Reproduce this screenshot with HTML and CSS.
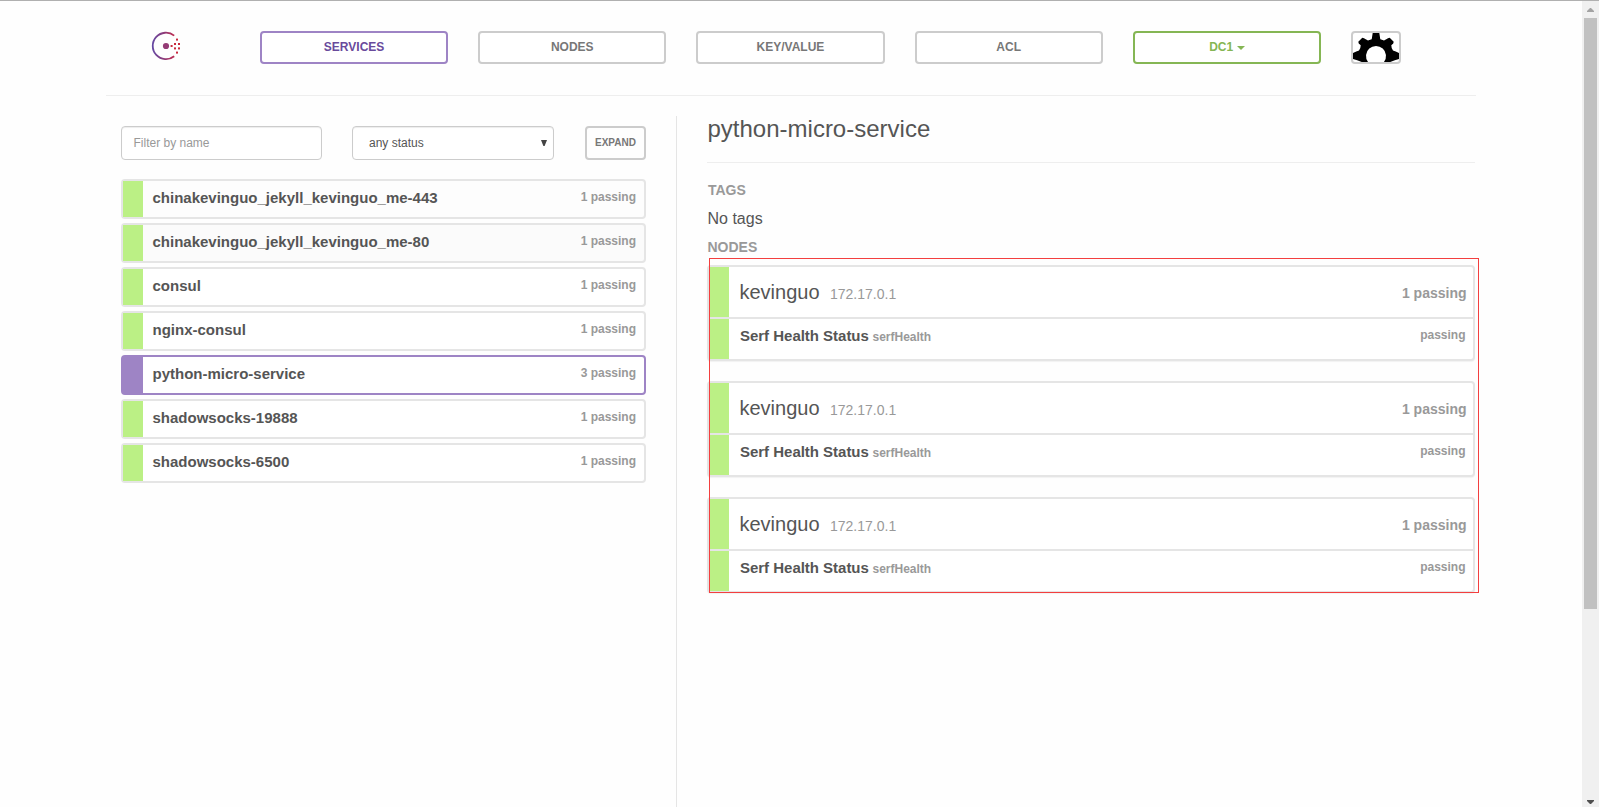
FILE: index.html
```html
<!DOCTYPE html>
<html lang="en">
<head>
<meta charset="utf-8">
<title>Consul</title>
<link rel="stylesheet" href="styles.css">
</head>
<body>
<div class="page">
  <div class="container">
    <header class="topbar">
      <div class="brand">
        <svg width="30" height="30" viewBox="0 0 30 30">
          <defs><linearGradient id="ring" gradientUnits="userSpaceOnUse" x1="1" y1="0" x2="25" y2="0"><stop offset="0" stop-color="#6349a5"/><stop offset=".5" stop-color="#8d3a78"/><stop offset="1" stop-color="#c62a49"/></linearGradient></defs>
          <path d="M23.2 4.6A13.2 13.2 0 1 0 23.2 25.2" fill="none" stroke="url(#ring)" stroke-width="1.8"/>
          <circle cx="15" cy="15" r="3.1" fill="#943b75"/>
          <g fill="#c9283c"><rect x="19.6" y="14" width="2" height="2"/><rect x="23" y="12" width="2" height="2"/><rect x="23" y="16.4" width="2" height="2"/><rect x="27" y="12" width="2" height="2"/><rect x="27" y="16.4" width="2" height="2"/><rect x="25" y="7.6" width="2" height="2"/><rect x="25" y="20.6" width="2" height="2"/></g>
        </svg>
      </div>
      <nav class="nav">
        <a class="btn btn-active">SERVICES</a>
        <a class="btn">NODES</a>
        <a class="btn">KEY/VALUE</a>
        <a class="btn">ACL</a>
        <a class="btn btn-dc">DC1 <span class="caret"></span></a>
        <a class="btn btn-gear"><svg width="46" height="29" viewBox="0 0 46 29">
          <path d="M19.7 0H26.3L27.3 6.3L31 7.5L33.3 6.3Q35 4.7 36.7 4.7L40.7 8.7Q41 10.3 38.3 12.3Q38.3 15.5 40 17.5Q42.5 18 46 20V26Q42 27 37.3 29H31A10 10 0 1 0 15 29H8.7Q4 27 0 26V20Q3.5 18 6 17.5Q7.7 15.5 7.7 12.3Q5 10.3 5.3 8.7L9.3 4.7Q11 4.7 12.7 6.3L15 7.5L18.7 6.3Z"/></svg></a>
      </nav>
    </header>
    <main class="columns">
      <section class="left">
        <div class="filters">
          <div class="field">Filter by name</div>
          <div class="field select"><span>any status</span><svg width="6" height="6" viewBox="0 0 6 6"><path d="M0 0H6L3.6 6H2.4Z" fill="#444"/></svg></div>
          <div class="expand">EXPAND</div>
        </div>
        <div class="list">
          <div class="item shade1"><b>chinakevinguo_jekyll_kevinguo_me-443</b><span>1 passing</span></div>
          <div class="item shade2"><b>chinakevinguo_jekyll_kevinguo_me-80</b><span>1 passing</span></div>
          <div class="item"><b>consul</b><span>1 passing</span></div>
          <div class="item"><b>nginx-consul</b><span>1 passing</span></div>
          <div class="item selected"><b>python-micro-service</b><span>3 passing</span></div>
          <div class="item"><b>shadowsocks-19888</b><span>1 passing</span></div>
          <div class="item"><b>shadowsocks-6500</b><span>1 passing</span></div>
        </div>
      </section>
      <section class="right">
        <h1 class="title">python-micro-service</h1>
        <h5 class="label label-tags">TAGS</h5>
        <p class="tags">No tags</p>
        <h5 class="label">NODES</h5>
        <div class="nodes">
          <div class="card">
            <div class="card-head"><span class="name">kevinguo</span><span class="ip">172.17.0.1</span><span class="count">1 passing</span></div>
            <div class="card-row"><b class="check">Serf Health Status</b><span class="id">serfHealth</span><span class="state">passing</span></div>
          </div>
          <div class="card">
            <div class="card-head"><span class="name">kevinguo</span><span class="ip">172.17.0.1</span><span class="count">1 passing</span></div>
            <div class="card-row"><b class="check">Serf Health Status</b><span class="id">serfHealth</span><span class="state">passing</span></div>
          </div>
          <div class="card">
            <div class="card-head"><span class="name">kevinguo</span><span class="ip">172.17.0.1</span><span class="count">1 passing</span></div>
            <div class="card-row"><b class="check">Serf Health Status</b><span class="id">serfHealth</span><span class="state">passing</span></div>
          </div>
          <div class="highlight"></div>
        </div>
      </section>
    </main>
  </div>
  <aside class="scrollbar">
    <svg class="arrow" width="7" height="4" viewBox="0 0 7 4"><path d="M0 4V3L3 0H4L7 3V4Z" fill="#a3a3a3"/></svg>
    <div class="thumb"></div>
    <svg class="arrow arrow-down" width="7" height="4" viewBox="0 0 7 4"><path d="M0 0V1L3 4H4L7 1V0Z" fill="#505050"/></svg>
  </aside>
</div>
</body>
</html>
```
FILE: styles.css
```css
* { box-sizing: border-box; }
body {
  margin: 0;
  background: #fefefe;
  color: #555;
  font-family: "Liberation Sans", Arial, sans-serif;
  overflow: hidden;
}
.page {
  display: flex;
  justify-content: space-between;
  height: 807px;
  border-top: 1px solid #b0b0b0;
  white-space: nowrap;
}
.container {
  width: 1370px;
  margin-left: 106px;
  display: flex;
  flex-direction: column;
}
.topbar {
  display: flex;
  height: 95px;
  padding-top: 30px;
  border-bottom: 1px solid #eee;
}
.brand { width: 154px; padding-left: 45px; }
.brand svg { display: block; }
.nav {
  flex: 1;
  display: grid;
  grid-template-columns: repeat(5, 188.2px) 50px;
  column-gap: 30px;
  align-content: start;
}
.btn {
  height: 33px;
  border: 2px solid #ccc;
  border-radius: 4px;
  background: #fff;
  color: #777;
  font-size: 12px;
  font-weight: bold;
  line-height: 28px;
  text-align: center;
}
.btn-active { border-color: #9e84c5; color: #694a9c; }
.btn-dc { border-color: #85b654; color: #85b654; }
.btn-gear svg { display: block; fill: #000; }
.caret {
  display: inline-block;
  border: 4px solid transparent;
  border-top-color: currentColor;
  border-bottom: 0;
  vertical-align: 1px;
}
.columns { flex: 1; display: flex; padding-top: 20px; }
.left { width: 571px; padding: 10px 30px 0 15px; border-right: 1px solid #e5e5e5; }
.filters { display: flex; height: 34px; margin-bottom: 19px; }
.field {
  width: 201px;
  margin-right: 30px;
  padding-left: 11.5px;
  border: 1px solid #ccc;
  border-radius: 4px;
  background: #fff;
  box-shadow: inset 0 1px 1px rgba(0, 0, 0, .075);
  color: #999;
  font-size: 12px;
  line-height: 32px;
}
.select {
  width: 202px;
  margin-right: 31px;
  padding: 0 6px 0 16px;
  display: flex;
  justify-content: space-between;
  align-items: center;
  color: #555;
}
.expand {
  flex: 1;
  border: 2px solid #ccc;
  border-radius: 4px;
  color: #777;
  font-size: 10px;
  font-weight: bold;
  line-height: 29px;
  text-align: center;
}
.list { display: flex; flex-direction: column; gap: 4px; }
.item {
  display: flex;
  justify-content: space-between;
  height: 40px;
  padding: 0 8px 0 10px;
  border: 2px solid #e5e5e5;
  border-radius: 4px;
  background: #fff;
  line-height: 33px;
}
.item::before { content: ""; width: 20px; margin-left: -10px; margin-right: 9.5px; background: #bbf085; }
.item b { flex: 1; font-size: 15px; }
.item span { color: #999; font-size: 12px; font-weight: bold; line-height: 32px; }
.shade1 { background: #fdfdfd; }
.shade2 { background: #fbfbfb; }
.selected { border-color: #9e84c5; }
.selected::before { background: #9e84c5; }
.right { flex: 1; padding: 0 1px 0 30px; }
.title {
  height: 47px;
  margin: 0 0 19px;
  padding-left: .5px;
  border-bottom: 1px solid #eee;
  font-size: 24px;
  font-weight: normal;
  line-height: 26px;
}
.label { margin: 0; padding-left: .5px; color: #999; font-size: 14px; line-height: 16px; }
.label-tags { padding-left: 1px; }
.tags { margin: 9px 0; padding-left: .5px; font-size: 16px; line-height: 23px; }
.nodes { position: relative; display: flex; flex-direction: column; gap: 20px; margin-top: 10px; }
.card {
  height: 96px;
  border: 2px solid #e5e5e5;
  border-radius: 4px;
  background: #fff;
  box-shadow: 0 1px 1px rgba(0, 0, 0, .05);
}
.card-head, .card-row { display: flex; }
.card-head::before, .card-row::before { content: ""; width: 20px; margin-right: 10.5px; background: #bbf085; }
.card-head { height: 50px; padding-right: 6.5px; line-height: 50px; }
.card-row { height: 42px; padding-right: 7.5px; border-top: 2px solid #e5e5e5; line-height: 33px; }
.name { width: 90.5px; font-size: 20px; }
.ip { color: #999; font-size: 14px; line-height: 54px; }
.count { margin-left: auto; color: #999; font-size: 14px; font-weight: bold; line-height: 52px; }
.check { width: 133px; padding-left: .5px; font-size: 15px; letter-spacing: -.02px; }
.id, .state { color: #999; font-size: 12px; font-weight: bold; }
.id { line-height: 37px; }
.state { margin-left: auto; line-height: 33px; }
.highlight { position: absolute; left: 2px; top: -7px; width: 770px; height: 335px; border: 1px solid #f33f3f; }
.scrollbar { width: 17px; display: flex; flex-direction: column; align-items: center; background: #f0f0f0; }
.arrow { margin-top: 7px; }
.thumb { width: 13px; height: 591px; margin-top: 6px; background: #c1c1c1; }
.arrow-down { margin-top: auto; margin-bottom: 3px; }
```
